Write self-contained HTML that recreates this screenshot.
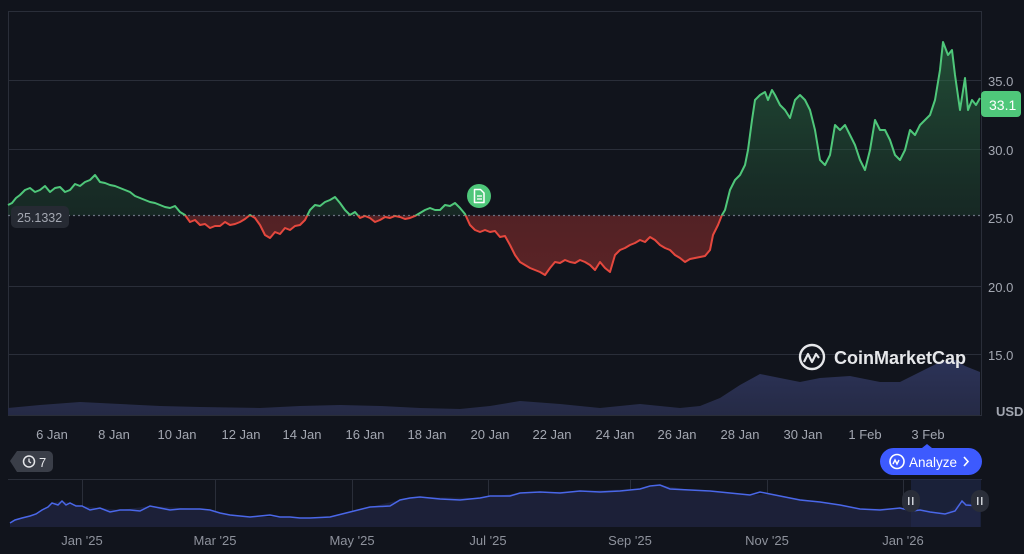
<!DOCTYPE html>
<html><head><meta charset="utf-8"><style>
body{margin:0;background:#11141c;width:1024px;height:554px;overflow:hidden;font-family:"Liberation Sans",sans-serif}
svg{position:absolute;left:0;top:0}
</style></head><body>
<svg width="1024" height="554" viewBox="0 0 1024 554">
<defs>
<clipPath id="up"><rect x="0" y="0" width="982" height="215.5"/></clipPath>
<clipPath id="dn"><rect x="0" y="215.5" width="982" height="200"/></clipPath>
<linearGradient id="gg" x1="0" y1="0" x2="0" y2="1"><stop offset="0" stop-color="#2f7d4c" stop-opacity=".55"/><stop offset="1" stop-color="#1b3a29" stop-opacity=".3"/></linearGradient>
<linearGradient id="rg" x1="0" y1="0" x2="0" y2="1"><stop offset="0" stop-color="#5a2025" stop-opacity=".6"/><stop offset="1" stop-color="#7a2a2a" stop-opacity=".7"/></linearGradient>
<linearGradient id="vg" x1="0" y1="0" x2="0" y2="1"><stop offset="0" stop-color="#2c3358"/><stop offset="1" stop-color="#252a45"/></linearGradient>
<path id="price" d="M8,205 L12,203 L16,198 L20,195 L25,190 L30,188 L35,192 L40,190 L45,186 L50,192 L55,188 L60,187 L65,192 L70,190 L75,184 L80,186 L85,182 L90,180 L95,175 L100,182 L105,183 L110,185 L115,186 L120,188 L125,190 L130,192 L135,196 L140,198 L145,200 L150,202 L155,203 L160,205 L165,207 L170,208 L175,206 L180,212 L185,215 L190,222 L195,220 L200,225 L205,224 L210,228 L215,226 L220,226 L225,222 L230,225 L235,224 L240,222 L245,219 L250,215 L255,218 L260,225 L265,235 L270,238 L275,232 L280,234 L285,228 L290,230 L295,226 L300,225 L305,220 L310,210 L315,205 L320,206 L325,202 L330,200 L335,197 L340,203 L345,210 L350,215 L355,212 L360,218 L365,216 L370,218 L375,222 L380,220 L385,217 L390,218 L395,216 L400,217 L405,219 L410,218 L415,216 L420,213 L425,210 L430,208 L435,210 L440,210 L445,205 L450,206 L455,203 L460,208 L465,214 L470,225 L475,230 L480,232 L485,230 L490,232 L495,231 L500,237 L505,236 L510,245 L515,255 L520,262 L525,265 L530,268 L535,270 L540,272 L545,275 L550,268 L555,262 L560,263 L565,260 L570,262 L575,263 L580,260 L585,262 L590,265 L595,270 L600,262 L605,268 L610,272 L615,255 L620,250 L625,248 L630,245 L635,243 L640,240 L645,242 L650,237 L655,240 L660,245 L665,248 L670,250 L675,255 L680,258 L685,262 L690,259 L695,258 L700,257 L705,256 L710,250 L713,235 L718,225 L722,215 L725,210 L730,190 L735,180 L740,175 L745,165 L748,150 L752,120 L755,100 L760,95 L765,92 L768,100 L772,90 L775,95 L780,105 L785,110 L790,118 L795,100 L800,95 L805,100 L810,110 L815,130 L820,160 L825,165 L830,155 L835,125 L840,130 L845,125 L850,135 L855,145 L860,160 L865,170 L870,150 L875,120 L880,130 L885,130 L890,140 L895,155 L900,160 L905,150 L910,130 L915,135 L920,125 L925,120 L930,115 L935,100 L940,70 L943,42 L948,55 L952,50 L955,75 L960,110 L965,78 L968,110 L972,100 L976,105 L980,98"/>
<path id="areaFill" d="M8,205 L12,203 L16,198 L20,195 L25,190 L30,188 L35,192 L40,190 L45,186 L50,192 L55,188 L60,187 L65,192 L70,190 L75,184 L80,186 L85,182 L90,180 L95,175 L100,182 L105,183 L110,185 L115,186 L120,188 L125,190 L130,192 L135,196 L140,198 L145,200 L150,202 L155,203 L160,205 L165,207 L170,208 L175,206 L180,212 L185,215 L190,222 L195,220 L200,225 L205,224 L210,228 L215,226 L220,226 L225,222 L230,225 L235,224 L240,222 L245,219 L250,215 L255,218 L260,225 L265,235 L270,238 L275,232 L280,234 L285,228 L290,230 L295,226 L300,225 L305,220 L310,210 L315,205 L320,206 L325,202 L330,200 L335,197 L340,203 L345,210 L350,215 L355,212 L360,218 L365,216 L370,218 L375,222 L380,220 L385,217 L390,218 L395,216 L400,217 L405,219 L410,218 L415,216 L420,213 L425,210 L430,208 L435,210 L440,210 L445,205 L450,206 L455,203 L460,208 L465,214 L470,225 L475,230 L480,232 L485,230 L490,232 L495,231 L500,237 L505,236 L510,245 L515,255 L520,262 L525,265 L530,268 L535,270 L540,272 L545,275 L550,268 L555,262 L560,263 L565,260 L570,262 L575,263 L580,260 L585,262 L590,265 L595,270 L600,262 L605,268 L610,272 L615,255 L620,250 L625,248 L630,245 L635,243 L640,240 L645,242 L650,237 L655,240 L660,245 L665,248 L670,250 L675,255 L680,258 L685,262 L690,259 L695,258 L700,257 L705,256 L710,250 L713,235 L718,225 L722,215 L725,210 L730,190 L735,180 L740,175 L745,165 L748,150 L752,120 L755,100 L760,95 L765,92 L768,100 L772,90 L775,95 L780,105 L785,110 L790,118 L795,100 L800,95 L805,100 L810,110 L815,130 L820,160 L825,165 L830,155 L835,125 L840,130 L845,125 L850,135 L855,145 L860,160 L865,170 L870,150 L875,120 L880,130 L885,130 L890,140 L895,155 L900,160 L905,150 L910,130 L915,135 L920,125 L925,120 L930,115 L935,100 L940,70 L943,42 L948,55 L952,50 L955,75 L960,110 L965,78 L968,110 L972,100 L976,105 L980,98 L980,215.5 L8,215.5 Z"/>
<path id="nav" d="M10,523 L15,520 L22,518 L30,516 L36,514 L42,510 L48,507 L52,503 L58,505 L62,501 L66,505 L70,503 L76,506 L82,506 L90,510 L100,508 L110,512 L120,510 L130,510 L140,511 L150,506 L160,508 L170,510 L180,509 L190,509 L200,509 L210,510 L220,513 L230,515 L240,516 L250,517 L260,516 L270,515 L280,517 L290,517 L300,518 L310,518 L330,517 L350,512 L370,507 L390,506 L400,500 L410,498 L420,497 L440,499 L460,500 L480,498 L490,496 L510,496 L520,493 L540,492 L560,493 L580,491 L600,492 L620,491 L640,489 L650,486 L660,485 L670,489 L690,490 L710,491 L730,493 L750,495 L760,492 L770,494 L790,498 L800,500 L820,502 L840,505 L860,509 L880,510 L900,508 L912,511 L920,510 L930,512 L945,514 L955,511 L962,501 L966,505 L980,506"/>
</defs>
<g stroke="#2a2e39" stroke-width="1">
<line x1="8" y1="11.5" x2="982" y2="11.5"/>
<line x1="8" y1="80.5" x2="982" y2="80.5"/>
<line x1="8" y1="149.5" x2="982" y2="149.5"/>
<line x1="8" y1="286.5" x2="982" y2="286.5"/>
<line x1="8" y1="354.5" x2="982" y2="354.5"/>
<line x1="981.5" y1="11" x2="981.5" y2="415"/>
<line x1="8.5" y1="11" x2="8.5" y2="415"/>
<line x1="8" y1="415.5" x2="982" y2="415.5"/>
</g>
<path d="M8,408 L40,405 L80,402 L120,404 L160,406 L200,407 L260,408 L300,406 L340,405 L380,406 L420,408 L460,409 L490,406 L520,401 L560,404 L600,408 L640,404 L680,408 L700,406 L720,398 L740,385 L760,374 L780,378 L800,382 L820,378 L850,376 L880,382 L900,382 L920,372 L940,362 L955,360 L965,366 L980,372 L980,415 L8,415 Z" fill="url(#vg)"/>
<use href="#areaFill" fill="url(#gg)" clip-path="url(#up)"/>
<use href="#areaFill" fill="url(#rg)" clip-path="url(#dn)"/>
<line x1="8" y1="215.5" x2="982" y2="215.5" stroke="#6b7080" stroke-width="1.2" stroke-dasharray="2,3"/>
<use href="#price" fill="none" stroke="#4fc77a" stroke-width="2" stroke-linejoin="round" clip-path="url(#up)"/>
<use href="#price" fill="none" stroke="#e5483e" stroke-width="2" stroke-linejoin="round" clip-path="url(#dn)"/>
<circle cx="479" cy="196" r="12" fill="#4fc77a"/>
<path d="M474.5,189.5 h6 l3.5,3.5 v9.5 h-9.5 z" fill="none" stroke="#fff" stroke-width="1.5" stroke-linejoin="round"/>
<line x1="477" y1="196" x2="482" y2="196" stroke="#fff" stroke-width="1.3"/>
<line x1="477" y1="199" x2="482" y2="199" stroke="#fff" stroke-width="1.3"/>
<rect x="11" y="206" width="58" height="22" rx="5" fill="#262a33"/>
<text x="17" y="222" font-size="12.5" fill="#a3a7b1">25.1332</text>
<g font-size="13" fill="#a3a7b1">
<text x="988" y="86">35.0</text>
<text x="988" y="155">30.0</text>
<text x="988" y="223">25.0</text>
<text x="988" y="292">20.0</text>
<text x="988" y="360">15.0</text>
<text x="996" y="416" font-weight="bold">USD</text>
</g>
<rect x="981" y="91" width="40" height="26" rx="4" fill="#4fc77a"/>
<text x="989" y="110" font-size="14" fill="#fff">33.1</text>
<circle cx="812" cy="357" r="12" fill="none" stroke="#e6e7ea" stroke-width="2.4"/>
<path d="M804,362 l4,-8 l4,8 l4,-8 l3,4" fill="none" stroke="#e6e7ea" stroke-width="2.2" stroke-linejoin="round"/>
<text x="834" y="364" font-size="18" font-weight="bold" fill="#e6e7ea">CoinMarketCap</text>
<g font-size="13" fill="#a3a7b1" text-anchor="middle">
<text x="52" y="439">6 Jan</text><text x="114" y="439">8 Jan</text><text x="177" y="439">10 Jan</text><text x="241" y="439">12 Jan</text><text x="302" y="439">14 Jan</text><text x="365" y="439">16 Jan</text><text x="427" y="439">18 Jan</text><text x="490" y="439">20 Jan</text><text x="552" y="439">22 Jan</text><text x="615" y="439">24 Jan</text><text x="677" y="439">26 Jan</text><text x="740" y="439">28 Jan</text><text x="803" y="439">30 Jan</text><text x="865" y="439">1 Feb</text><text x="928" y="439">3 Feb</text>
</g>
<path d="M10,461 L17,451 H48 a5,5 0 0 1 5,5 V467 a5,5 0 0 1 -5,5 H17 Z" fill="#3a3e48"/>
<circle cx="29" cy="461.5" r="5.5" fill="none" stroke="#e6e7ea" stroke-width="1.5"/>
<path d="M29,458.5 v3 l2,1.5" fill="none" stroke="#e6e7ea" stroke-width="1.3"/>
<text x="39" y="467" font-size="13" fill="#e6e7ea">7</text>
<path d="M922,448 l5,-4 l5,4 Z" fill="#3d5afe"/>
<rect x="880" y="448" width="102" height="27" rx="13.5" fill="#3d5afe"/>
<circle cx="897" cy="461.5" r="7" fill="none" stroke="#fff" stroke-width="1.6"/>
<path d="M893,464 l2,-4 l2,4 l2,-4" fill="none" stroke="#fff" stroke-width="1.4"/>
<text x="909" y="467" font-size="13.5" fill="#fff">Analyze</text>
<path d="M964,457 l4,4.5 l-4,4.5" fill="none" stroke="#fff" stroke-width="1.6"/>
<line x1="8" y1="479.5" x2="982" y2="479.5" stroke="#2a2e39"/>
<g stroke="#2a2e39"><line x1="82.5" y1="479" x2="82.5" y2="527"/><line x1="215.5" y1="479" x2="215.5" y2="527"/><line x1="352.5" y1="479" x2="352.5" y2="527"/><line x1="488.5" y1="479" x2="488.5" y2="527"/><line x1="630.5" y1="479" x2="630.5" y2="527"/><line x1="767.5" y1="479" x2="767.5" y2="527"/><line x1="903.5" y1="479" x2="903.5" y2="527"/></g>
<path d="M10,523 L15,520 L22,518 L30,516 L42,510 L52,503 L62,501 L70,503 L82,506 L100,508 L120,510 L150,506 L200,509 L240,516 L300,518 L330,517 L370,507 L400,500 L420,497 L480,498 L520,493 L580,491 L640,489 L660,485 L690,490 L750,495 L770,494 L820,502 L860,509 L900,508 L945,514 L962,501 L980,506 L980,527 L10,527 Z" fill="#1c2038"/>
<rect x="911" y="479" width="70" height="48" fill="#222a4c" opacity=".6"/>
<use href="#nav" fill="none" stroke="#4a67e8" stroke-width="1.5"/>
<rect x="902" y="490" width="18" height="22" rx="9" fill="#2a2e39"/><rect x="908" y="497" width="1.5" height="8" fill="#cfd2d8"/><rect x="912" y="497" width="1.5" height="8" fill="#cfd2d8"/>
<rect x="971" y="490" width="18" height="22" rx="9" fill="#2a2e39"/><rect x="977" y="497" width="1.5" height="8" fill="#cfd2d8"/><rect x="981" y="497" width="1.5" height="8" fill="#cfd2d8"/>
<g font-size="13" fill="#8e929c" text-anchor="middle">
<text x="82" y="545">Jan '25</text><text x="215" y="545">Mar '25</text><text x="352" y="545">May '25</text><text x="488" y="545">Jul '25</text><text x="630" y="545">Sep '25</text><text x="767" y="545">Nov '25</text><text x="903" y="545">Jan '26</text>
</g>
</svg>
</body></html>
